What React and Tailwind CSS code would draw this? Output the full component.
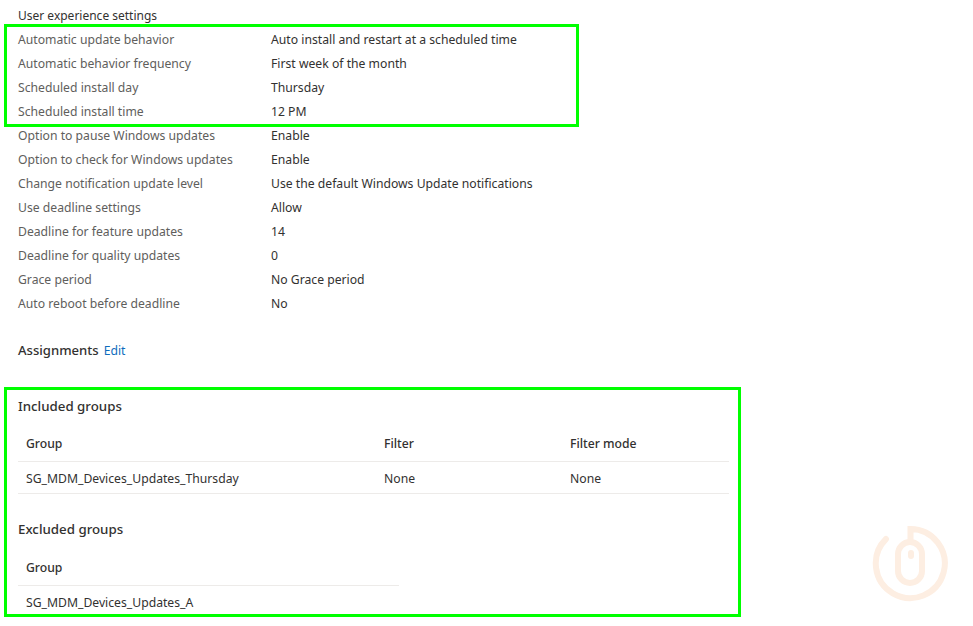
const settings = [
  ['Automatic update behavior', 'Auto install and restart at a scheduled time'],
  ['Automatic behavior frequency', 'First week of the month'],
  ['Scheduled install day', 'Thursday'],
  ['Scheduled install time', '12 PM'],
  ['Option to pause Windows updates', 'Enable'],
  ['Option to check for Windows updates', 'Enable'],
  ['Change notification update level', 'Use the default Windows Update notifications'],
  ['Use deadline settings', 'Allow'],
  ['Deadline for feature updates', '14'],
  ['Deadline for quality updates', '0'],
  ['Grace period', 'No Grace period'],
  ['Auto reboot before deadline', 'No'],
];

function MouseMark() {
  return (
    <svg width="77" height="77" viewBox="0 0 77 77" fill="none" stroke="#fdeee2" strokeWidth="6" strokeLinecap="round" className="absolute left-[872px] top-[525px]">
      <path d="M14 14A34.5 34.5 0 1 0 38.5 4V17" />
      <rect x="26" y="17" width="24" height="41" rx="12" />
      <path d="M39 28V31" />
    </svg>
  );
}

export default function App() {
  return (
    <div className="relative h-[626px] w-[973px] overflow-hidden bg-white font-['Noto_Sans',sans-serif] text-[12.2px] text-[#323130]">
      <div className="pl-[18px] pt-[4px]">
        <div className="flex h-6 items-center text-[12px]">User experience settings</div>
        {settings.map(([label, value]) => (
          <div key={label} className="flex h-6 items-center">
            <div className="w-[253px] text-[#605e5c]">{label}</div>
            <div>{value}</div>
          </div>
        ))}

        <div className="mt-[23px] flex h-6 items-center gap-[5px]">
          <span className="text-[13.1px] font-medium">Assignments</span>
          <a className="text-[#0f6cbd]">Edit</a>
        </div>

        <h3 className="mt-[32px] flex h-6 items-center text-[13.3px] font-medium">Included groups</h3>
        <table className="mt-[7px] w-[711px] table-fixed border-collapse">
          <thead>
            <tr className="h-[35px] border-b border-[#edebe9] text-left">
              <th className="w-[358px] pl-2 pt-[2px] font-medium">Group</th>
              <th className="w-[186px] pl-2 pt-[2px] font-medium">Filter</th>
              <th className="pl-2 pt-[2px] font-medium">Filter mode</th>
            </tr>
          </thead>
          <tbody>
            <tr className="h-8 border-b border-[#edebe9]">
              <td className="pl-2 pt-[4px]">SG_MDM_Devices_Updates_Thursday</td>
              <td className="pl-2 pt-[4px]">None</td>
              <td className="pl-2 pt-[4px]">None</td>
            </tr>
          </tbody>
        </table>

        <h3 className="mt-[24px] flex h-6 items-center text-[13.3px] font-medium">Excluded groups</h3>
        <table className="mt-[9px] w-[381px] border-collapse">
          <thead>
            <tr className="h-[35px] border-b border-[#edebe9] text-left">
              <th className="pl-2 font-medium">Group</th>
            </tr>
          </thead>
          <tbody>
            <tr className="h-8">
              <td className="pl-2 pt-[2px]">SG_MDM_Devices_Updates_A</td>
            </tr>
          </tbody>
        </table>
      </div>

      {/* highlight boxes drawn over the page */}
      <div className="absolute left-[4px] top-[24px] h-[103px] w-[575px] border-[3px] border-[#00ff00]" />
      <div className="absolute left-[4px] top-[387px] h-[230px] w-[737px] border-[3px] border-[#00ff00]" />
      <MouseMark />
    </div>
  );
}
